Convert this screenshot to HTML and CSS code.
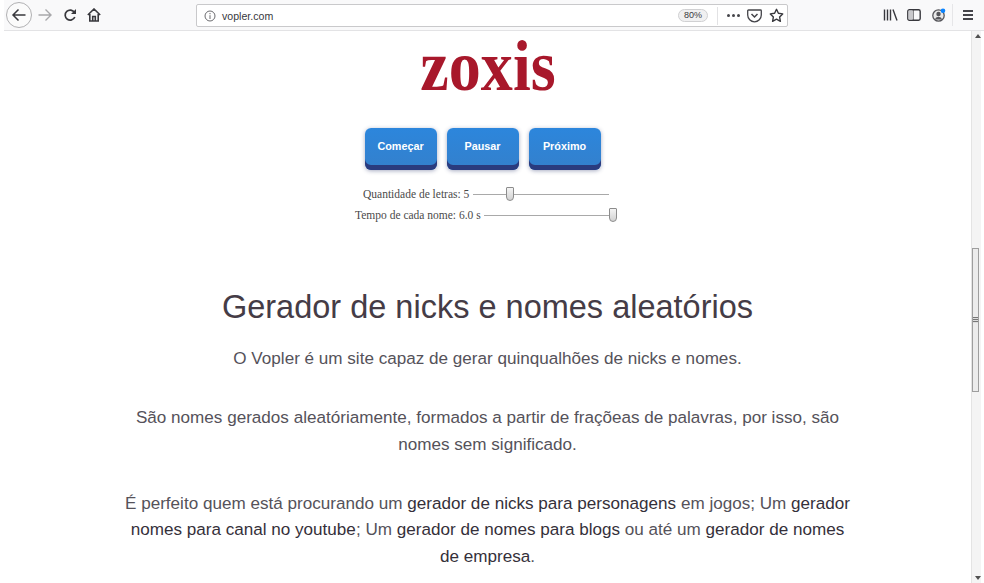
FILE: index.html
```html
<!DOCTYPE html>
<html lang="pt-BR">
<head>
<meta charset="utf-8">
<title>Vopler</title>
<link rel="stylesheet" href="styles.css">
</head>
<body>
<div class="window">
  <header class="toolbar">
    <div class="nav">
      <span class="back"><svg width="16" height="16" viewBox="0 0 16 16"><path d="M14.500 8H2M7.500 2.500 2 8l5.500 5.500" fill="none" stroke="#38383d" stroke-width="1.500"/></svg></span>
      <span class="ico ico-fwd"><svg width="16" height="16" viewBox="0 0 16 16"><path d="M1.500 8H14M8.500 2.500 14 8l-5.500 5.500" fill="none" stroke="#a8a8ab" stroke-width="1.400"/></svg></span>
      <span class="ico ico-reload"><svg width="14" height="14" viewBox="0 0 14 14"><path d="M11.800 9a5 5 0 1 1-.3-4.400" fill="none" stroke="#38383d" stroke-width="1.700"/><path d="M13 1v5H8z" fill="#38383d"/></svg></span>
      <span class="ico ico-home"><svg width="14" height="14" viewBox="0 0 14 14"><path d="M.8 7 7 1l6.200 6M2.800 6v7h8.400V6M5.700 13V8.500h2.600V13" fill="none" stroke="#38383d" stroke-width="1.600"/></svg></span>
    </div>
    <div class="urlbar">
      <svg class="info" width="12" height="12" viewBox="0 0 12 12"><circle cx="6" cy="6" r="5" fill="none" stroke="#6a6a6e"/><path d="M6 5.200V9M6 3v1.200" stroke="#6a6a6e"/></svg>
      <span class="url">vopler.com</span>
      <span class="zoom">80%</span>
      <span class="sep"></span>
      <span class="dots"><i></i><i></i><i></i></span>
      <svg class="pocket" width="15" height="14" viewBox="0 0 15 14"><path d="M1.500 1h12a.8.8 0 0 1 .8.8V6a6.800 6.800 0 0 1-13.600 0V1.800A.8.8 0 0 1 1.500 1z" fill="none" stroke="#45454a" stroke-width="1.300"/><path d="M4.500 5 7.500 8l3-3" fill="none" stroke="#45454a" stroke-width="1.500"/></svg>
      <svg class="star" width="15" height="15" viewBox="0 0 15 15"><path d="m7.500 1.300 1.900 4 4.300.6-3.100 3 .8 4.400-3.900-2.100-3.900 2.100.8-4.400-3.100-3 4.300-.6z" fill="none" stroke="#38383d" stroke-width="1.400" stroke-linejoin="round"/></svg>
    </div>
    <div class="tools">
      <svg class="library" width="15" height="14" viewBox="0 0 15 14"><path d="M1.500 1.500v11M4.500 1.500v11M7.500 1.500v11M10 1.500l4 11" fill="none" stroke="#38383d" stroke-width="1.400"/></svg>
      <svg class="sidebar" width="14" height="12" viewBox="0 0 14 12"><rect x=".8" y=".8" width="12.400" height="10.400" rx="1.600" fill="none" stroke="#38383d" stroke-width="1.400"/><path d="M6 1v10" stroke="#38383d" stroke-width="1.200"/><path d="M1.500 1.500H6v9H1.500z" fill="#c9c9cc"/></svg>
      <span class="account"><svg width="14" height="14" viewBox="0 0 14 14"><circle cx="6.500" cy="7.500" r="5.700" fill="#e8e8e8" stroke="#55555a" stroke-width="1.300"/><circle cx="6.500" cy="6" r="2.200" fill="#55555a"/><path d="M2.800 11.500a3.900 3.900 0 0 1 7.400 0z" fill="#55555a"/><circle cx="11" cy="2.800" r="2.300" fill="#0a84ff"/></svg></span>
      <span class="tool-sep"></span>
      <span class="menu"><i></i><i></i><i></i></span>
    </div>
  </header>
  <div class="viewport">
    <main class="page">
      <div class="logo-row"><h2 class="logo">zoxis</h2></div>
      <div class="buttons">
        <button class="btn">Começar</button>
        <button class="btn">Pausar</button>
        <button class="btn">Próximo</button>
      </div>
      <div class="sliders">
        <div class="slider slider-letters"><label>Quantidade de letras: 5</label><span class="track"><span class="thumb" style="left:27%"></span></span></div>
        <div class="slider slider-time"><label>Tempo de cada nome: 6.0 s</label><span class="track"><span class="thumb" style="left:99%"></span></span></div>
      </div>
      <h1>Gerador de nicks e nomes aleatórios</h1>
      <p class="lead">O Vopler é um site capaz de gerar quinqualhões de nicks e nomes.</p>
      <p>São nomes gerados aleatóriamente, formados a partir de fraçõeas de palavras, por isso, são nomes sem significado.</p>
      <p>É perfeito quem está procurando um <a>gerador de nicks para personagens</a> em jogos; Um <a>gerador nomes para canal no youtube</a>; Um <a>gerador de nomes para blogs</a> ou até um <a>gerador de nomes de empresa</a>.</p>
    </main>
    <aside class="scrollbar">
      <span class="arrow-up"></span>
      <span class="thumb-bar"><span class="grip"></span></span>
      <span class="arrow-down"></span>
    </aside>
  </div>
</div>
</body>
</html>
```
FILE: styles.css
```css
* { box-sizing: border-box; }
html, body { margin: 0; height: 100%; overflow: hidden; background: #fff; }
body { font-family: "Liberation Sans", Arial, sans-serif; }
.window { width: 984px; height: 583px; display: flex; flex-direction: column; padding-left: 4px; }

.toolbar { height: 31px; flex: none; display: flex; align-items: center; background: #f9f9fa; border-bottom: 1px solid #e3e3e5; position: relative; }
.nav { width: 192px; flex: none; display: flex; align-items: center; }
.back { width: 26px; height: 26px; border-radius: 50%; border: 1px solid #b1b1b3; background: #fbfbfb; display: flex; align-items: center; justify-content: center; margin-left: 2px; }
.ico { display: flex; align-items: center; justify-content: center; }
.ico-fwd { margin-left: 5px; }
.ico-reload { margin-left: 10px; }
.ico-home { margin-left: 10px; }

.urlbar { width: 592px; height: 23px; margin-top: 1px; flex: none; background: #fff; border: 1px solid #c9c9cb; border-radius: 2px; display: flex; align-items: center; padding-left: 6px; font-size: 10.600px; color: #38383d; }
.info { margin-left: 1px; }
.url { margin-left: 6px; flex: 1; }
.zoom { width: 30px; height: 13px; border: 1px solid #d0d0d2; background: #f0f0f1; border-radius: 7px; font-size: 9px; line-height: 11px; text-align: center; }
.sep { width: 1px; height: 18px; background: #e2e2e4; margin-left: 9px; }
.dots { display: flex; gap: 2px; margin-left: 9px; }
.dots i { width: 3px; height: 3px; border-radius: 50%; background: #45454a; }
.pocket { margin-left: 7px; }
.star { margin-left: 7px; margin-right: 3px; }

.tools { flex: 1; display: flex; align-items: center; }
.library { margin-left: 95px; }
.sidebar { margin-left: 9px; }
.account { display: flex; margin-left: 11px; }
.tool-sep { width: 1px; height: 22px; background: #e6e6e8; margin-left: 6px; }
.menu { display: flex; flex-direction: column; gap: 2px; margin-left: 10px; }
.menu i { width: 10px; height: 2px; background: #45454a; }

.viewport { flex: 1; display: flex; min-height: 0; }
.page { width: 967px; flex: none; text-align: center; color: #55525a; }
.logo-row { height: 68px; padding-top: 3px; }
.logo { display: inline-block; margin: 0; font: 700 72px/65px "Liberation Serif", serif; color: #a8182b; transform: scaleX(.89); }

.buttons { display: flex; justify-content: center; gap: 10px; margin-top: 29px; padding-right: 10px; }
.btn { width: 72px; height: 42px; padding: 0 0 7px; border: 0; border-radius: 6px; background: linear-gradient(#2c86dc, #3480cc); box-shadow: inset 0 -5px 0 #2a3b7e, 0 1px 4px rgba(60, 70, 120, .45); color: #fff; font: 700 10.800px "Liberation Sans", Arial, sans-serif; }

.sliders { margin-top: 13px; font: 11.500px "Liberation Serif", serif; color: #4a4a4a; }
.slider { height: 21px; display: flex; align-items: center; }
.slider-letters { padding-left: 359px; }
.slider-time { padding-left: 351px; }
.slider-letters .track { margin-left: 4px; width: 136px; }
.slider-time .track { margin-left: 3px; width: 131px; }
.track { height: 1px; margin-top: 1px; background: #a9a9a9; position: relative; display: block; }
.thumb { position: absolute; top: -7px; width: 8px; height: 14px; margin-left: -4px; background: linear-gradient(#f4f4f4, #d2d2d2); border: 1px solid #8c8c8c; border-radius: 1px 1px 4px 4px; }

h1 { margin: 60px 0 0; font: 400 32.500px/44px "Liberation Sans", Arial, sans-serif; color: #453c46; }
p { margin: 0 auto; width: 730px; font-size: 17.100px; line-height: 26.500px; }
.lead { margin-top: 17px; }
p + p { margin-top: 32.500px; }
p a { color: #35303a; }

.scrollbar { flex: 1; position: relative; background: #f4f4f4; border-left: 1px solid #e4e4e4; margin-right: 3px; }
.arrow-up, .arrow-down { position: absolute; left: 3px; width: 0; height: 0; border-left: 3px solid transparent; border-right: 3px solid transparent; }
.arrow-up { top: 3px; border-bottom: 4px solid #505050; }
.arrow-down { bottom: 3px; border-top: 4px solid #505050; }
.thumb-bar { position: absolute; left: 0; right: 2px; top: 217px; height: 144px; background: #ececec; border: 1px solid #9e9e9e; }
.grip { position: absolute; left: 0; right: 0; top: 68px; height: 6px; background: repeating-linear-gradient(#777 0 1px, #ddd 1px 2px); }
```
